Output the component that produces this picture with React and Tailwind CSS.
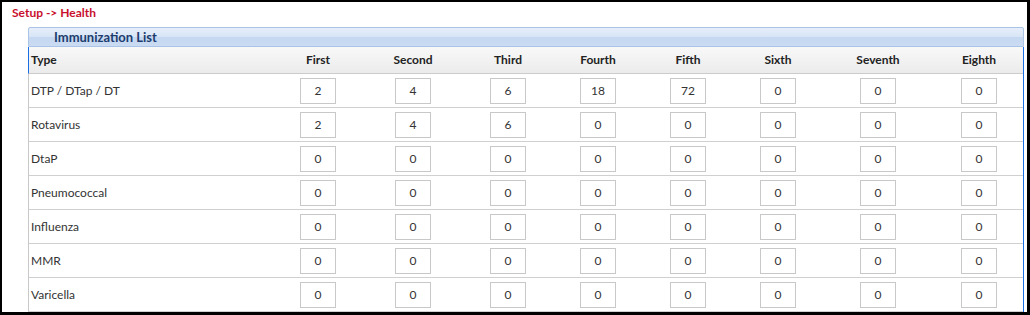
import React from "react";

const COLUMNS = ["First", "Second", "Third", "Fourth", "Fifth", "Sixth", "Seventh", "Eighth"];

const ROWS = [
	{ type: "DTP / DTap / DT", values: [2, 4, 6, 18, 72, 0, 0, 0] },
	{ type: "Rotavirus", values: [2, 4, 6, 0, 0, 0, 0, 0] },
	{ type: "DtaP", values: [0, 0, 0, 0, 0, 0, 0, 0] },
	{ type: "Pneumococcal", values: [0, 0, 0, 0, 0, 0, 0, 0] },
	{ type: "Influenza", values: [0, 0, 0, 0, 0, 0, 0, 0] },
	{ type: "MMR", values: [0, 0, 0, 0, 0, 0, 0, 0] },
	{ type: "Varicella", values: [0, 0, 0, 0, 0, 0, 0, 0] },
];

const GRID = "grid grid-cols-[242px_94px_96px_94px_86px_94px_86px_114px_88px]";

export default function App() {
	return (
		<div className="w-[1030px] h-[315px] overflow-hidden bg-white border-black border-l-2 border-t-2 border-r-[3px] border-b-[3px] font-['Lato','Open_Sans',sans-serif]">
			{/* Breadcrumb */}
			<div className="pl-[10px] pt-[3px] h-[25px] text-[12px] leading-[16px] font-bold text-[#c8102e]">
				Setup -&gt; Health
			</div>

			{/* Panel */}
			<div className="ml-[26px] w-[996px]">
				<div className="h-[20px] border border-[#a9c4e6] rounded-t-[2px] bg-[linear-gradient(#e6eef9_0%,#d8e5f6_50%,#c5d8f1_52%,#cadbf2_100%)] pl-[25px] text-[13px] leading-[18px] font-bold text-[#1d3c6e]">
					Immunization List
				</div>

				<div className="border-l border-[#c8c8c8] border-r border-r-[#1a6fe6]">
					{/* Column headings */}
					<div className={`${GRID} h-[27px] border-b border-[#cccccc] bg-[linear-gradient(#f8f8f8,#ebebeb)] text-[12px] font-bold text-[#222] items-center -ml-px border-l border-l-[#1a6fe6]`}>
						<div className="pl-[2px]">Type</div>
						{COLUMNS.map((col) => (
							<div key={col} className="text-center">
								{col}
							</div>
						))}
					</div>

					{/* Rows */}
					{ROWS.map((row) => (
						<div key={row.type} className={`${GRID} h-[34px] border-b border-[#d0d0d0] items-center text-[12px] text-[#333]`}>
							<div className="pl-[2px]">{row.type}</div>
							{row.values.map((v, i) => (
								<div key={i} className="flex justify-center">
									<input
										readOnly
										value={v}
										className="w-[36px] h-[26px] border border-[#c8c8c8] bg-white text-center text-[12px] text-[#333] outline-none"
									/>
								</div>
							))}
						</div>
					))}
				</div>
			</div>
		</div>
	);
}
